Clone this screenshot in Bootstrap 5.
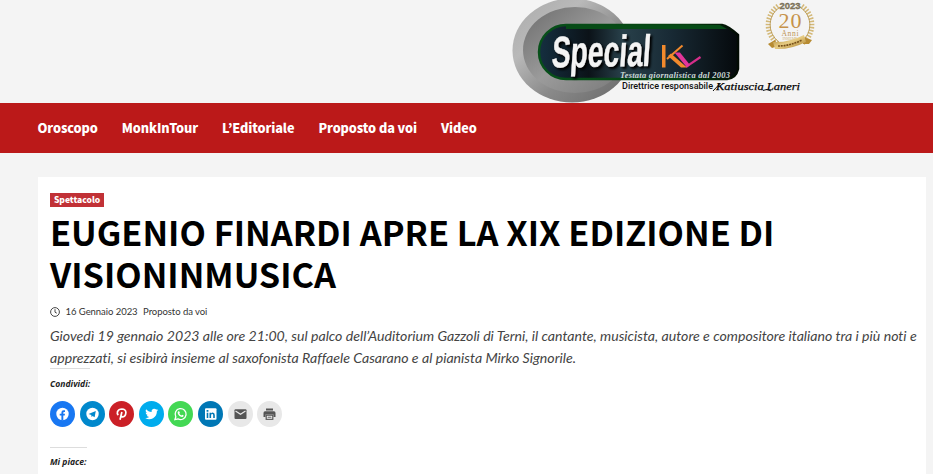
<!DOCTYPE html>
<html lang="it">
<head>
<meta charset="utf-8">
<meta name="viewport" content="width=device-width, initial-scale=1">
<title>Special K</title>
<link href="https://cdn.jsdelivr.net/npm/bootstrap@5.3.0/dist/css/bootstrap.min.css" rel="stylesheet">
<style>
body{background:#f4f4f4;height:474px;overflow:hidden;font-family:"Noto Sans CJK JP","Noto Sans",sans-serif;color:#000}
.masthead{height:103px;padding-left:510px}
.masthead svg{display:block}
.wordmark{filter:drop-shadow(2px 2px 1px #000)}
.mainbar{height:50px;background:#bb1919;padding-left:37.5px;gap:24px}
.mainbar a{font-size:12.7px;font-weight:900;line-height:50px;letter-spacing:-.1px;color:#fff;text-decoration:none;white-space:nowrap}
.article{margin:24px 7px 0 38px;padding:16px 12px 0;height:297px;background:#fff}
.cat{background:#c13136;color:#fff;font-size:8.5px;font-weight:900;width:54px;height:14px;line-height:13px}
.headline{font-size:34.3px;line-height:42px;font-weight:700;margin:3px 0 0;white-space:nowrap}
.meta{font:400 9.5px/14px Lato,sans-serif;color:#333;margin-top:11px;gap:5.5px;letter-spacing:-.05px}
.lead-text{font:italic 400 14.15px/22px Lato,sans-serif;color:#444;margin:6px 0 -1px;white-space:nowrap;font-variant-ligatures:none}
.sd{font:italic 700 8.6px/12px "Open Sans",sans-serif;color:#222}
.sd span{display:inline-block;border-top:1px solid #ddd;padding-top:9px}
.share{gap:4.6px;margin-top:11px}
.share a{width:25px;height:26px;display:block}
.share svg{display:block}
.likes{margin-top:20px}
.likes span{padding-top:8px}
</style>
<script src="https://cdn.jsdelivr.net/npm/bootstrap@5.3.0/dist/js/bootstrap.bundle.min.js"></script>
</head>
<body>
<header class="masthead">
<svg width="310" height="103" viewBox="510 0 310 103">
<defs>
<linearGradient id="ring" x1="0" y1="0" x2="1" y2="1"><stop offset="0" stop-color="#aaa"/><stop offset=".3" stop-color="#b9b9b9"/><stop offset=".6" stop-color="#8a8a8a"/><stop offset="1" stop-color="#666"/></linearGradient>
<linearGradient id="disc" x1="0" y1="0" x2="1" y2="1"><stop offset="0" stop-color="#6c6c6c"/><stop offset=".5" stop-color="#9b9b9b"/><stop offset="1" stop-color="#777"/></linearGradient>
<linearGradient id="pill" x1="0" y1="0" x2="1" y2="0"><stop offset="0" stop-color="#152f40"/><stop offset=".25" stop-color="#0b1218"/><stop offset=".42" stop-color="#28404a"/><stop offset=".65" stop-color="#192b36"/><stop offset="1" stop-color="#05090c"/></linearGradient>
<linearGradient id="edge" x1="0" y1="0" x2="1" y2="0"><stop offset="0" stop-color="#07501a"/><stop offset=".75" stop-color="#06400f"/><stop offset="1" stop-color="#020a03"/></linearGradient>
<linearGradient id="gold" x1="0" y1="0" x2="1" y2="1"><stop offset="0" stop-color="#a9822f"/><stop offset=".5" stop-color="#e7cc83"/><stop offset="1" stop-color="#a37622"/></linearGradient>
</defs>
<ellipse cx="572" cy="50.500" rx="59.500" ry="52" fill="url(#ring)"/>
<ellipse cx="575" cy="50" rx="52" ry="43" fill="url(#disc)"/>
<path d="M566 25H722Q728 26 738 35V69Q736 78 727 79H566A27 27 0 0 1 566 25Z" fill="url(#pill)" stroke="url(#edge)" stroke-width="2.500"/>
<path d="M566 25H720L727 29H566Z" fill="#064b16"/>
<g class="wordmark" font-family="Liberation Sans,sans-serif" font-weight="700">
<text transform="translate(551 67.500) rotate(-1) skewX(-5)" x="0" y="0" font-size="44" textLength="99" lengthAdjust="spacingAndGlyphs" fill="#f4f4f4" stroke="#f4f4f4" stroke-width=".5">Special</text>
</g>
<g fill="none">
<path d="M682.500 45.500L667 59" stroke="#f28a2c" stroke-width="2"/>
<path d="M686 66.800L700.500 57" stroke="#d52e8a" stroke-width="2.200"/>
</g>
<path d="M662 45H665.500V67.500H662Z" fill="#f28a2c"/>
<path d="M668 56L671 53.500L687 67.500H681Z" fill="#f28a2c"/>
<path d="M674.500 52.500H680L690 65L687 67.500Z" fill="#e3359a"/>
<text x="620" y="78" font-family="Liberation Serif,serif" font-style="italic" font-weight="700" font-size="8.500" textLength="110" fill="#c9d8d4">Testata giornalistica dal 2003</text>
<text x="622" y="89" font-family="Roboto,sans-serif" font-weight="500" font-size="9" textLength="91" lengthAdjust="spacingAndGlyphs" fill="#111">Direttrice responsabile</text>
<text x="716" y="89.500" font-family="Liberation Serif,serif" font-style="italic" font-size="11" textLength="84" lengthAdjust="spacingAndGlyphs" fill="#000" stroke="#000" stroke-width=".25">Katiuscia Laneri</text>
<path d="M713 91L720 83.500M763 90.500Q767 88 771 91" fill="none" stroke="#111"/>
<g fill="none" stroke="#d3b878">
<path d="M778 6A23 23 0 0 0 777 43M802 6A23 23 0 0 1 803 43" stroke-width="5" stroke-dasharray="1.500 1.500"/>
<path d="M780 7A21 21 0 0 0 779 42M800 7A21 21 0 0 1 801 42" stroke="#b4934a" stroke-width=".8"/>
</g>
<g text-anchor="middle" font-family="Liberation Serif,serif">
<text x="790" y="8.500" font-family="Liberation Sans,sans-serif" font-weight="700" font-size="9.500" textLength="21" fill="#8d8163" stroke="#5f573f" stroke-width=".3">2023</text>
<text x="790" y="28" font-size="22" textLength="23" fill="#c6924a">20</text>
<text x="790" y="35.500" font-size="7.500" textLength="17" fill="#bd9352">Anni</text>
<text x="790" y="40" font-size="4" textLength="15" fill="#d3b783">INSIEME</text>
</g>
<path d="M768 44L775 40L778 46L772 48ZM803 37L812 40L809 44L803 44Z" fill="#b78b32"/>
<path d="M773 42Q788 43 804 35L806 42Q790 50 775 49Z" fill="url(#gold)"/>
<path d="M778 46Q790 46 802 40" fill="none" stroke="#765019" stroke-width="1.600" stroke-dasharray="2 .8"/>
</svg>
</header>
<nav class="mainbar d-flex">
<a href="#">Oroscopo</a><a href="#">MonkInTour</a><a href="#">L’Editoriale</a><a href="#">Proposto da voi</a><a href="#">Video</a>
</nav>
<main class="article">
<div class="cat text-center">Spettacolo</div>
<h1 class="headline">EUGENIO FINARDI APRE LA XIX EDIZIONE DI<br>VISIONINMUSICA</h1>
<div class="meta d-flex align-items-center">
<svg width="10" height="10" viewBox="0 0 10 10" fill="none" stroke="#333" stroke-width=".9"><circle cx="5" cy="5" r="4.400"/><path d="M5 2.200V5.200L6.800 6.200"/></svg>
<span>16 Gennaio 2023</span><span>Proposto da voi</span>
</div>
<p class="lead-text">Giovedì 19 gennaio 2023 alle ore 21:00, sul palco dell’Auditorium Gazzoli di Terni, il cantante, musicista, autore e compositore italiano tra i più noti e<br>apprezzati, si esibirà insieme al saxofonista Raffaele Casarano e al pianista Mirko Signorile.</p>
<div class="sd d-flex"><span>Condividi:</span></div>
<div class="share d-flex">
<a href="#" aria-label="Facebook"><svg width="25" height="26" viewBox="0 0 25 26"><ellipse cx="12.500" cy="13" rx="12.500" ry="13" fill="#1877f2"/><circle cx="12.500" cy="13" r="6.200" fill="#fff"/><path d="M11.400 19.500V14.600H9.700V12.700H11.400V11.400Q11.400 9.200 13.600 9.200H15V10.900H14.100Q13.300 10.900 13.300 11.700V12.700H15L14.700 14.600H13.300V19.500Z" fill="#1877f2"/></svg></a>
<a href="#" aria-label="Telegram"><svg width="25" height="26" viewBox="0 0 25 26"><ellipse cx="12.500" cy="13" rx="12.500" ry="13" fill="#0088cc"/><circle cx="12.500" cy="13" r="6.200" fill="#fff"/><path d="M8.500 12.900L15.800 10L14.600 16.300L12.600 14.900L11.500 15.900L11.300 14.100Z" fill="#0088cc"/></svg></a>
<a href="#" aria-label="Pinterest"><svg width="25" height="26" viewBox="0 0 25 26"><ellipse cx="12.500" cy="13" rx="12.500" ry="13" fill="#cb2027"/><path d="M9.300 14.200Q7.800 12.800 8.500 10.600Q9.700 8 12.900 8Q16.800 8.200 16.900 11.500Q16.600 15.600 13.800 15.800Q12.700 15.800 12.200 15M12.900 11L11 18.800" fill="none" stroke="#fff" stroke-width="1.700"/></svg></a>
<a href="#" aria-label="Twitter"><svg width="25" height="26" viewBox="0 0 25 26"><ellipse cx="12.500" cy="13" rx="12.500" ry="13" fill="#00aced"/><path transform="translate(4.800 5.300) scale(.65)" d="M22.200 5.700c-.7.300-1.500.5-2.400.6.900-.5 1.500-1.300 1.800-2.300-.8.500-1.700.8-2.600 1a4.100 4.100 0 0 0-7 3.700C8.600 8.500 5.600 6.900 3.600 4.400a4.100 4.100 0 0 0 1.300 5.500c-.7 0-1.300-.2-1.900-.5 0 2 1.400 3.700 3.300 4.100-.6.200-1.200.2-1.800.1a4.100 4.100 0 0 0 3.800 2.800A8.300 8.300 0 0 1 2.200 18a11.600 11.600 0 0 0 17.900-10.300c.8-.5 1.500-1.200 2.100-2z" fill="#fff"/></svg></a>
<a href="#" aria-label="WhatsApp"><svg width="25" height="26" viewBox="0 0 25 26"><ellipse cx="12.500" cy="13" rx="12.500" ry="13" fill="#43d854"/><path d="M6.900 18.700L7.800 15.700A5.500 5.500 0 1 1 10 17.900Z" fill="none" stroke="#fff" stroke-width="1.300"/><path d="M10.300 10.300L11.200 10.200L11.900 11.700L11.300 12.500Q12.100 13.900 13.500 14.500L14.200 13.700L15.700 14.500Q15.400 16 14 16Q10.600 15.500 9.600 12Q9.600 10.900 10.300 10.300Z" fill="#fff"/></svg></a>
<a href="#" aria-label="LinkedIn"><svg width="25" height="26" viewBox="0 0 25 26"><ellipse cx="12.500" cy="13" rx="12.500" ry="13" fill="#0077b5"/><rect x="7" y="7.300" width="11.500" height="11.500" rx="1" fill="#fff"/><path d="M8.700 11.700H10.300V17H8.700ZM8.600 9H10.400V10.700H8.600ZM11.500 11.700H13V12.500Q13.500 11.600 14.700 11.600Q16.800 11.600 16.800 14.100V17H15.200V14.300Q15.200 12.900 14.200 12.900Q13.100 12.900 13.100 14.300V17H11.500Z" fill="#0077b5"/></svg></a>
<a href="#" aria-label="E-mail"><svg width="25" height="26" viewBox="0 0 25 26"><ellipse cx="12.500" cy="13" rx="12.500" ry="13" fill="#e8e8e8"/><rect x="6.500" y="8.300" width="12" height="9.800" rx="1" fill="#555"/><path d="M7.500 10L12.500 13.200L17.500 10" fill="none" stroke="#e8e8e8" stroke-width="1.200"/></svg></a>
<a href="#" aria-label="Stampa"><svg width="25" height="26" viewBox="0 0 25 26"><ellipse cx="12.500" cy="13" rx="12.500" ry="13" fill="#e8e8e8"/><path d="M9 7.500H16V9.500H9ZM8 10.300H17Q18.500 10.300 18.500 12V16H16.500V13.600H8.500V16H6.500V12Q6.500 10.300 8 10.300Z" fill="#555"/><rect x="9.200" y="14.200" width="6.600" height="4.100" fill="#fff" stroke="#555" stroke-width="1.200"/><path d="M10.500 16.200H14.500" stroke="#555"/></svg></a>
</div>
<div class="sd likes d-flex"><span>Mi piace:</span></div>
</main>
</body>
</html>
